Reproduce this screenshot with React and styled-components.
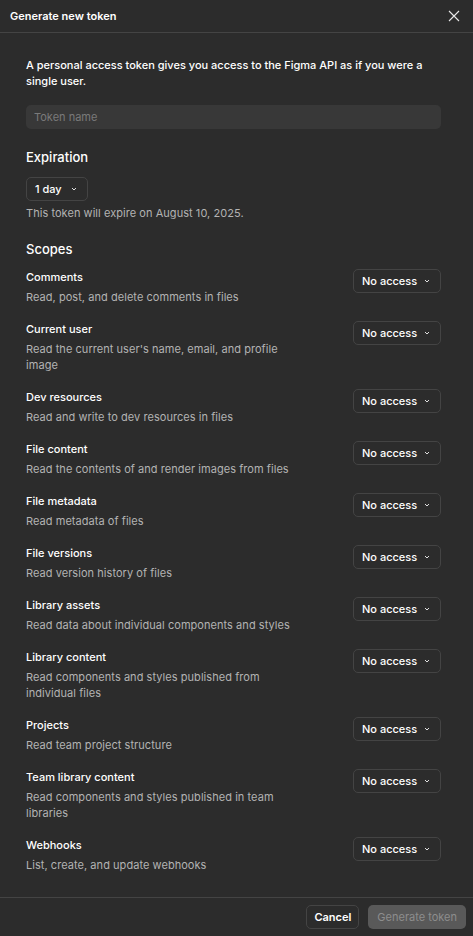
import React from "react";
import styled, { createGlobalStyle } from "styled-components";

const Global = createGlobalStyle`
  html, body { margin: 0; padding: 0; background: #2c2c2c; }
  body { font-family: Inter, "Noto Sans", "Liberation Sans", sans-serif; -webkit-font-smoothing: antialiased; }
  * { box-sizing: border-box; }
`;

const Dialog = styled.div`
  width: 473px;
  height: 936px;
  background: #2c2c2c;
  color: #fff;
  display: flex;
  flex-direction: column;
  overflow: hidden;
`;

const Header = styled.div`
  height: 33px;
  flex: none;
  display: flex;
  align-items: center;
  justify-content: space-between;
  padding: 0 10px 1px 10px;
  border-bottom: 1px solid #444444;
`;

const Title = styled.div`
  font-size: 11px;
  font-weight: 600;
  line-height: 16px;
  color: #ffffff;
`;

const CloseButton = styled.button`
  width: 24px;
  height: 24px;
  margin-right: -3px;
  display: flex;
  align-items: center;
  justify-content: center;
  background: none;
  border: none;
  padding: 0;
  color: #e6e6e6;
`;

const Body = styled.div`
  flex: 1;
  overflow: hidden;
  padding: 24px 32px 24px 26px;
  display: flex;
  flex-direction: column;
`;

const Intro = styled.p`
  margin: 0;
  font-size: 11px;
  line-height: 16px;
  font-weight: 500;
  color: #ffffff;
`;

const Input = styled.input`
  margin-top: 16px;
  height: 24px;
  width: 100%;
  border: none;
  outline: none;
  border-radius: 5px;
  background: #383838;
  padding: 0 8px;
  font-family: inherit;
  font-size: 11px;
  color: #fff;
  &::placeholder { color: #7a7a7a; }
`;

const Heading = styled.h2`
  margin: ${(p) => p.$top}px 0 0;
  font-size: 13px;
  line-height: 24px;
  font-weight: 500;
  color: #ffffff;
`;

const Select = styled.button`
  flex: none;
  height: 24px;
  width: ${(p) => p.$w}px;
  display: flex;
  align-items: center;
  justify-content: space-between;
  padding: 0 9px 0 8px;
  background: transparent;
  border: 1px solid #444444;
  border-radius: 5px;
  font-family: inherit;
  font-size: 11px;
  font-weight: 500;
  color: #ffffff;
  line-height: 16px;
`;

const ExpirySelect = styled(Select)`
  margin-top: 8px;
`;

const Hint = styled.div`
  margin-top: 4px;
  font-size: 11px;
  line-height: 16px;
  color: #b3b3b3;
  font-weight: 400;
  letter-spacing: 0.05px;
`;

const ScopeList = styled.div`
  margin-top: 8px;
  display: flex;
  flex-direction: column;
  gap: 16px;
`;

const ScopeRow = styled.div`
  display: flex;
  align-items: flex-start;
  justify-content: space-between;
`;

const ScopeText = styled.div`
  display: flex;
  flex-direction: column;
  gap: 4px;
  max-width: 272px;
`;

const ScopeName = styled.div`
  font-size: 11px;
  line-height: 16px;
  font-weight: 500;
  color: #ffffff;
`;

const ScopeDesc = styled.div`
  font-size: 11px;
  line-height: 16px;
  color: #b3b3b3;
  letter-spacing: 0.05px;
`;

const Footer = styled.div`
  flex: none;
  height: 39px;
  border-top: 1px solid #444444;
  display: flex;
  align-items: center;
  justify-content: flex-end;
  gap: 9px;
  padding: 0 7px 0 0;
`;

const Button = styled.button`
  height: 24px;
  padding: 0 ${(p) => (p.$primary ? 8 : 7)}px;
  border-radius: 5px;
  font-family: inherit;
  font-size: 11px;
  font-weight: ${(p) => (p.$primary ? 400 : 600)};
  border: 1px solid ${(p) => (p.$primary ? "transparent" : "#444444")};
  background: ${(p) => (p.$primary ? "#595959" : "transparent")};
  color: ${(p) => (p.$primary ? "#8d8d8d" : "#ffffff")};
`;

const Chevron = () => (
  <svg width="8" height="8" viewBox="0 0 8 8" fill="none">
    <path d="M2 3 L4 5 L6 3" stroke="#e0e0e0" strokeWidth="1" />
  </svg>
);

const scopes = [
  ["Comments", "Read, post, and delete comments in files"],
  ["Current user", "Read the current user's name, email, and profile image"],
  ["Dev resources", "Read and write to dev resources in files"],
  ["File content", "Read the contents of and render images from files"],
  ["File metadata", "Read metadata of files"],
  ["File versions", "Read version history of files"],
  ["Library assets", "Read data about individual components and styles"],
  ["Library content", "Read components and styles published from individual files"],
  ["Projects", "Read team project structure"],
  ["Team library content", "Read components and styles published in team libraries"],
  ["Webhooks", "List, create, and update webhooks"],
];

export default function App() {
  return (
    <>
      <Global />
      <Dialog>
        <Header>
          <Title>Generate new token</Title>
          <CloseButton aria-label="Close">
            <svg width="12" height="12" viewBox="0 0 12 12" fill="none">
              <path d="M1 1 L11 11 M11 1 L1 11" stroke="#e8e8e8" strokeWidth="1.1" />
            </svg>
          </CloseButton>
        </Header>
        <Body>
          <Intro>
            A personal access token gives you access to the Figma API as if you were a single user.
          </Intro>
          <Input placeholder="Token name" />
          <Heading $top={16}>Expiration</Heading>
          <ExpirySelect $w={62}>
            <span>1 day</span>
            <Chevron />
          </ExpirySelect>
          <Hint>This token will expire on August 10, 2025.</Hint>
          <Heading $top={16}>Scopes</Heading>
          <ScopeList>
            {scopes.map(([name, desc]) => (
              <ScopeRow key={name}>
                <ScopeText>
                  <ScopeName>{name}</ScopeName>
                  <ScopeDesc>{desc}</ScopeDesc>
                </ScopeText>
                <Select $w={88}>
                  <span>No access</span>
                  <Chevron />
                </Select>
              </ScopeRow>
            ))}
          </ScopeList>
        </Body>
        <Footer>
          <Button>Cancel</Button>
          <Button $primary>Generate token</Button>
        </Footer>
      </Dialog>
    </>
  );
}
